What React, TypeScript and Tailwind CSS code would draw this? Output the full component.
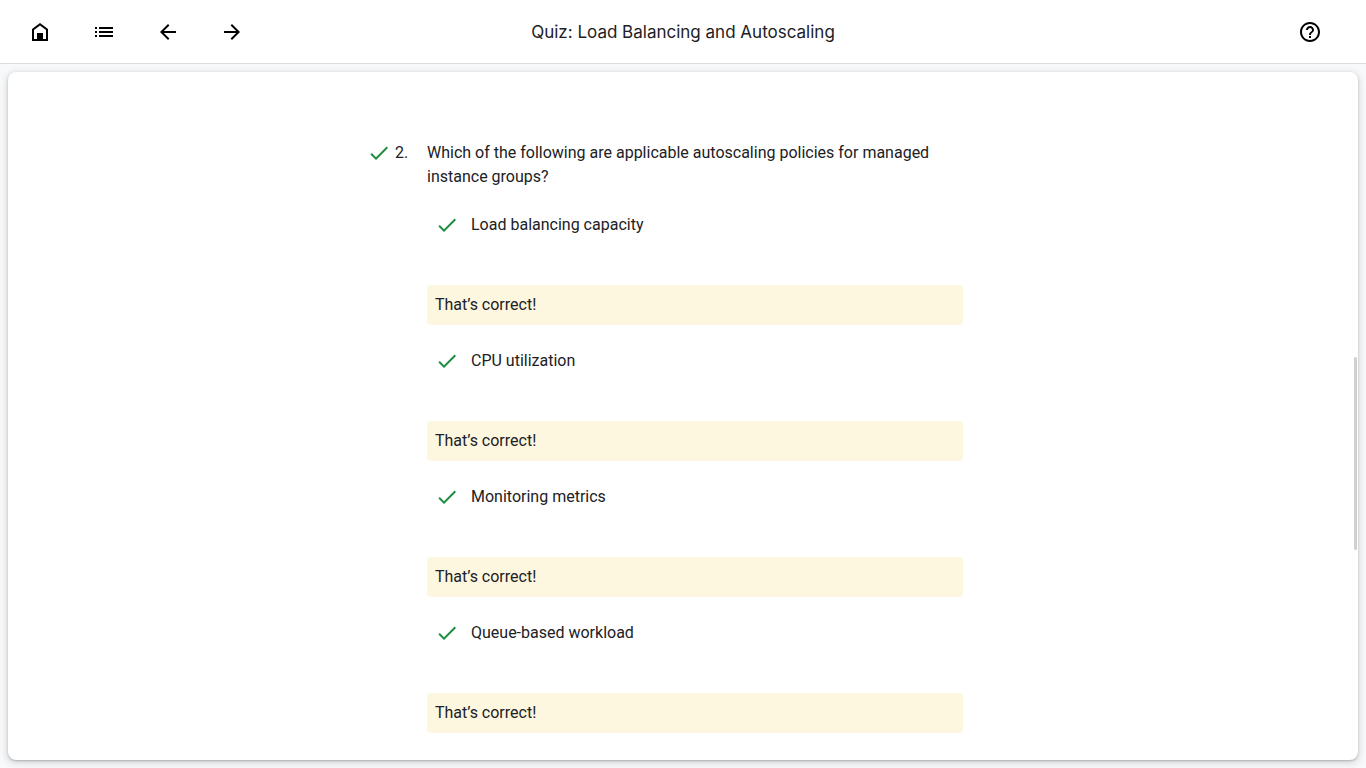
import type { ReactNode } from "react";

const answers = [
  "Load balancing capacity",
  "CPU utilization",
  "Monitoring metrics",
  "Queue-based workload",
];

function Icon({ d }: { d: string }) {
  return (
    <svg viewBox="0 0 24 24" className="size-6 shrink-0" fill="currentColor" aria-hidden="true">
      <path d={d} />
    </svg>
  );
}

function IconButton({ label, children }: { label: string; children: ReactNode }) {
  return (
    <button type="button" aria-label={label} className="flex size-12 items-center justify-center rounded-full text-black">
      {children}
    </button>
  );
}

function Check() {
  return (
    <span className="text-[#1e8e3e]">
      <Icon d="M9 16.17 4.83 12l-1.42 1.41L9 19 21 7l-1.41-1.41z" />
    </span>
  );
}

export default function App() {
  return (
    <div className="flex h-screen flex-col bg-[#f8f9fa] font-[Roboto,sans-serif] text-base text-[#202124]">
      <header className="grid h-16 shrink-0 grid-cols-[1fr_auto_1fr] items-center border-b border-[#dadce0] bg-white px-4">
        <nav className="flex gap-4" aria-label="Course">
          <IconButton label="Home">
            <Icon d="M4 21V9l8-6 8 6v12H4Zm2-2h3v-6h6v6h3v-9l-6-4.500L6 10v9Z" />
          </IconButton>
          <IconButton label="Contents">
            <Icon d="M3 7h2v2H3zM3 11h2v2H3zM3 15h2v2H3zM7 7h14v2H7zM7 11h14v2H7zM7 15h14v2H7z" />
          </IconButton>
          <IconButton label="Previous">
            <Icon d="M20 11H7.83l5.59-5.59L12 4l-8 8 8 8 1.41-1.41L7.83 13H20z" />
          </IconButton>
          <IconButton label="Next">
            <Icon d="m12 4-1.41 1.41L16.17 11H4v2h12.17l-5.58 5.59L12 20l8-8z" />
          </IconButton>
        </nav>
        <h1 className="font-[Inter,sans-serif] text-[17px] leading-6">Quiz: Load Balancing and Autoscaling</h1>
        <div className="flex justify-end pr-4">
          <IconButton label="Help">
            <Icon d="M11 18h2v-2h-2zm1-16C6.48 2 2 6.48 2 12s4.480 10 10 10 10-4.480 10-10S17.520 2 12 2m0 18c-4.410 0-8-3.590-8-8s3.590-8 8-8 8 3.590 8 8-3.590 8-8 8m0-14c-2.210 0-4 1.790-4 4h2c0-1.100.9-2 2-2s2 .9 2 2c0 2-3 1.750-3 5h2c0-2.250 3-2.500 3-5 0-2.210-1.790-4-4-4" />
          </IconButton>
        </div>
      </header>

      <main className="relative m-2 min-h-0 flex-1 overflow-hidden rounded-lg bg-white pt-[69px] shadow-[0_1px_2px_rgba(60,64,67,0.3),0_2px_6px_2px_rgba(60,64,67,0.15)]">
        <section className="mx-auto flex max-w-[640px] pr-10 pl-1">
          <Check />
          <span className="w-9 shrink-0 pl-1 leading-6">2.</span>
          <div className="min-w-0 flex-1">
            <h2 className="leading-6">
              Which of the following are applicable autoscaling policies for managed instance groups?
            </h2>
            <ul className="mt-6 flex flex-col gap-6">
              {answers.map((answer) => (
                <li key={answer}>
                  <div className="flex gap-3 pl-2 leading-6">
                    <Check />
                    {answer}
                  </div>
                  <p className="mt-12 rounded-sm bg-[#fef7e0] p-2 leading-6">That’s correct!</p>
                </li>
              ))}
            </ul>
          </div>
        </section>
        <div className="absolute top-[285px] right-px h-[193px] w-[3px] rounded-sm bg-[#d0d0d0]" />
      </main>
    </div>
  );
}
